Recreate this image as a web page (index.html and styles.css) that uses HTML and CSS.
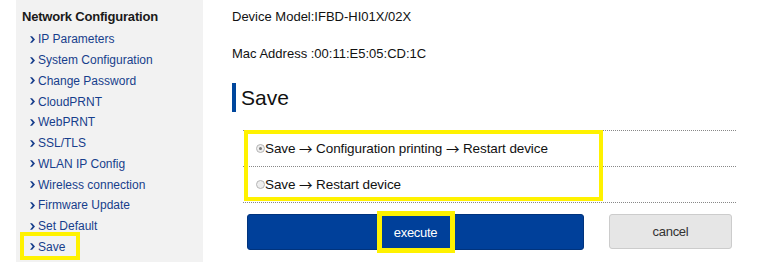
FILE: index.html
```html
<!DOCTYPE html>
<html>
<head>
<meta charset="utf-8">
<link rel="stylesheet" href="styles.css">
</head>
<body>
<div class="page">
  <aside class="sidebar">
    <div class="side-title">Network Configuration</div>
    <ul class="nav">
      <li><svg class="chev" viewBox="0 0 6 8"><polygon points="0,0 2.5,0 6,4 2.5,8 0,8 3.2,4"/></svg>IP Parameters</li>
      <li><svg class="chev" viewBox="0 0 6 8"><polygon points="0,0 2.5,0 6,4 2.5,8 0,8 3.2,4"/></svg>System Configuration</li>
      <li><svg class="chev" viewBox="0 0 6 8"><polygon points="0,0 2.5,0 6,4 2.5,8 0,8 3.2,4"/></svg>Change Password</li>
      <li><svg class="chev" viewBox="0 0 6 8"><polygon points="0,0 2.5,0 6,4 2.5,8 0,8 3.2,4"/></svg>CloudPRNT</li>
      <li><svg class="chev" viewBox="0 0 6 8"><polygon points="0,0 2.5,0 6,4 2.5,8 0,8 3.2,4"/></svg>WebPRNT</li>
      <li><svg class="chev" viewBox="0 0 6 8"><polygon points="0,0 2.5,0 6,4 2.5,8 0,8 3.2,4"/></svg>SSL/TLS</li>
      <li><svg class="chev" viewBox="0 0 6 8"><polygon points="0,0 2.5,0 6,4 2.5,8 0,8 3.2,4"/></svg>WLAN IP Config</li>
      <li><svg class="chev" viewBox="0 0 6 8"><polygon points="0,0 2.5,0 6,4 2.5,8 0,8 3.2,4"/></svg>Wireless connection</li>
      <li><svg class="chev" viewBox="0 0 6 8"><polygon points="0,0 2.5,0 6,4 2.5,8 0,8 3.2,4"/></svg>Firmware Update</li>
      <li><svg class="chev" viewBox="0 0 6 8"><polygon points="0,0 2.5,0 6,4 2.5,8 0,8 3.2,4"/></svg>Set Default</li>
      <li><svg class="chev" viewBox="0 0 6 8"><polygon points="0,0 2.5,0 6,4 2.5,8 0,8 3.2,4"/></svg>Save</li>
    </ul>
  </aside>
  <main class="main">
    <div class="info first">Device Model:IFBD-HI01X/02X</div>
    <div class="info second">Mac Address :00:11:E5:05:CD:1C</div>
    <h2 class="heading">Save</h2>
    <div class="options">
      <div class="opt"><span class="radio checked"></span>Save <span class="arrow">→</span> Configuration printing <span class="arrow">→</span> Restart device</div>
      <div class="opt"><span class="radio"></span>Save <span class="arrow">→</span> Restart device</div>
    </div>
    <div class="buttons">
      <button class="btn execute">execute</button>
      <button class="btn cancel">cancel</button>
    </div>
  </main>
  <div class="mark mark-save"></div>
  <div class="mark mark-options"></div>
  <div class="mark mark-execute"></div>
</div>
</body>
</html>
```
FILE: styles.css
```css
html, body {
  margin: 0;
  padding: 0;
  background: #fff;
}
body {
  font-family: "Liberation Sans", Arial, sans-serif;
  color: #111;
}
.page {
  position: relative;
  display: flex;
  height: 262px;
  overflow: hidden;
}
.sidebar {
  margin-left: 16px;
  width: 187px;
  background: #f2f2f2;
  padding-top: 9px;
  box-sizing: border-box;
}
.side-title {
  margin-left: 6px;
  font-size: 13px;
  font-weight: bold;
  line-height: 16px;
  color: #1a1a1a;
  letter-spacing: -0.2px;
}
.nav {
  list-style: none;
  margin: 4px 0 0 0;
  padding: 0 0 0 14px;
}
.nav li {
  display: flex;
  align-items: center;
  height: 20.75px;
  font-size: 12px;
  color: #173e8c;
}
.chev {
  width: 5px;
  height: 7px;
  margin-right: 3px;
  fill: #173e8c;
  flex: none;
}
.main {
  padding-left: 29px;
  flex: 1;
}
.info {
  font-size: 13px;
  line-height: 16px;
  letter-spacing: 0;
}
.info.first { margin-top: 9px; }
.info.second { margin-top: 21px; }
.heading {
  margin: 21px 0 0 0;
  height: 29px;
  border-left: 4px solid #00479d;
  padding-left: 5px;
  font-size: 21px;
  font-weight: normal;
  line-height: 29px;
  color: #111;
}
.options {
  margin: 18px 0 0 11px;
  width: 493px;
  border-bottom: 1px dotted #888;
}
.opt {
  height: 35px;
  border-top: 1px dotted #888;
  display: flex;
  align-items: center;
  padding-left: 13px;
  font-size: 13.5px;
  letter-spacing: -0.1px;
  white-space: pre;
}
.arrow {
  font-family: "Noto Sans CJK JP", sans-serif;
  font-size: 13.5px;
  line-height: 1;
}
.radio {
  width: 7px;
  height: 7px;
  border: 1px solid #b5b5b5;
  border-radius: 50%;
  background: #eee;
  box-sizing: content-box;
  margin-right: 0;
  position: relative;
  flex: none;
}
.radio.checked::after {
  content: "";
  position: absolute;
  left: 2px;
  top: 2px;
  width: 3px;
  height: 3px;
  border-radius: 50%;
  background: #777;
}
.buttons {
  display: flex;
  margin: 11px 0 0 15px;
  align-items: flex-start;
}
.btn {
  font-family: "Liberation Sans", Arial, sans-serif;
  font-size: 13px;
  letter-spacing: -0.3px;
  border-radius: 3px;
  padding: 0;
  cursor: pointer;
}
.execute {
  width: 337px;
  height: 36px;
  background: #00409a;
  border: 1px solid #00337d;
  color: #fff;
}
.cancel {
  margin-left: 25px;
  width: 123px;
  height: 35px;
  background: #e6e6e6;
  border: 1px solid #cccccc;
  color: #333;
}
.mark {
  position: absolute;
  border: 4px solid #fff200;
  box-sizing: border-box;
  pointer-events: none;
}
.mark-save {
  left: 20px;
  top: 232px;
  width: 60px;
  height: 28px;
}
.mark-options {
  left: 244px;
  top: 130px;
  width: 359px;
  height: 71px;
}
.mark-execute {
  left: 377px;
  top: 211px;
  width: 78px;
  height: 42px;
  border-width: 5px;
}
```
